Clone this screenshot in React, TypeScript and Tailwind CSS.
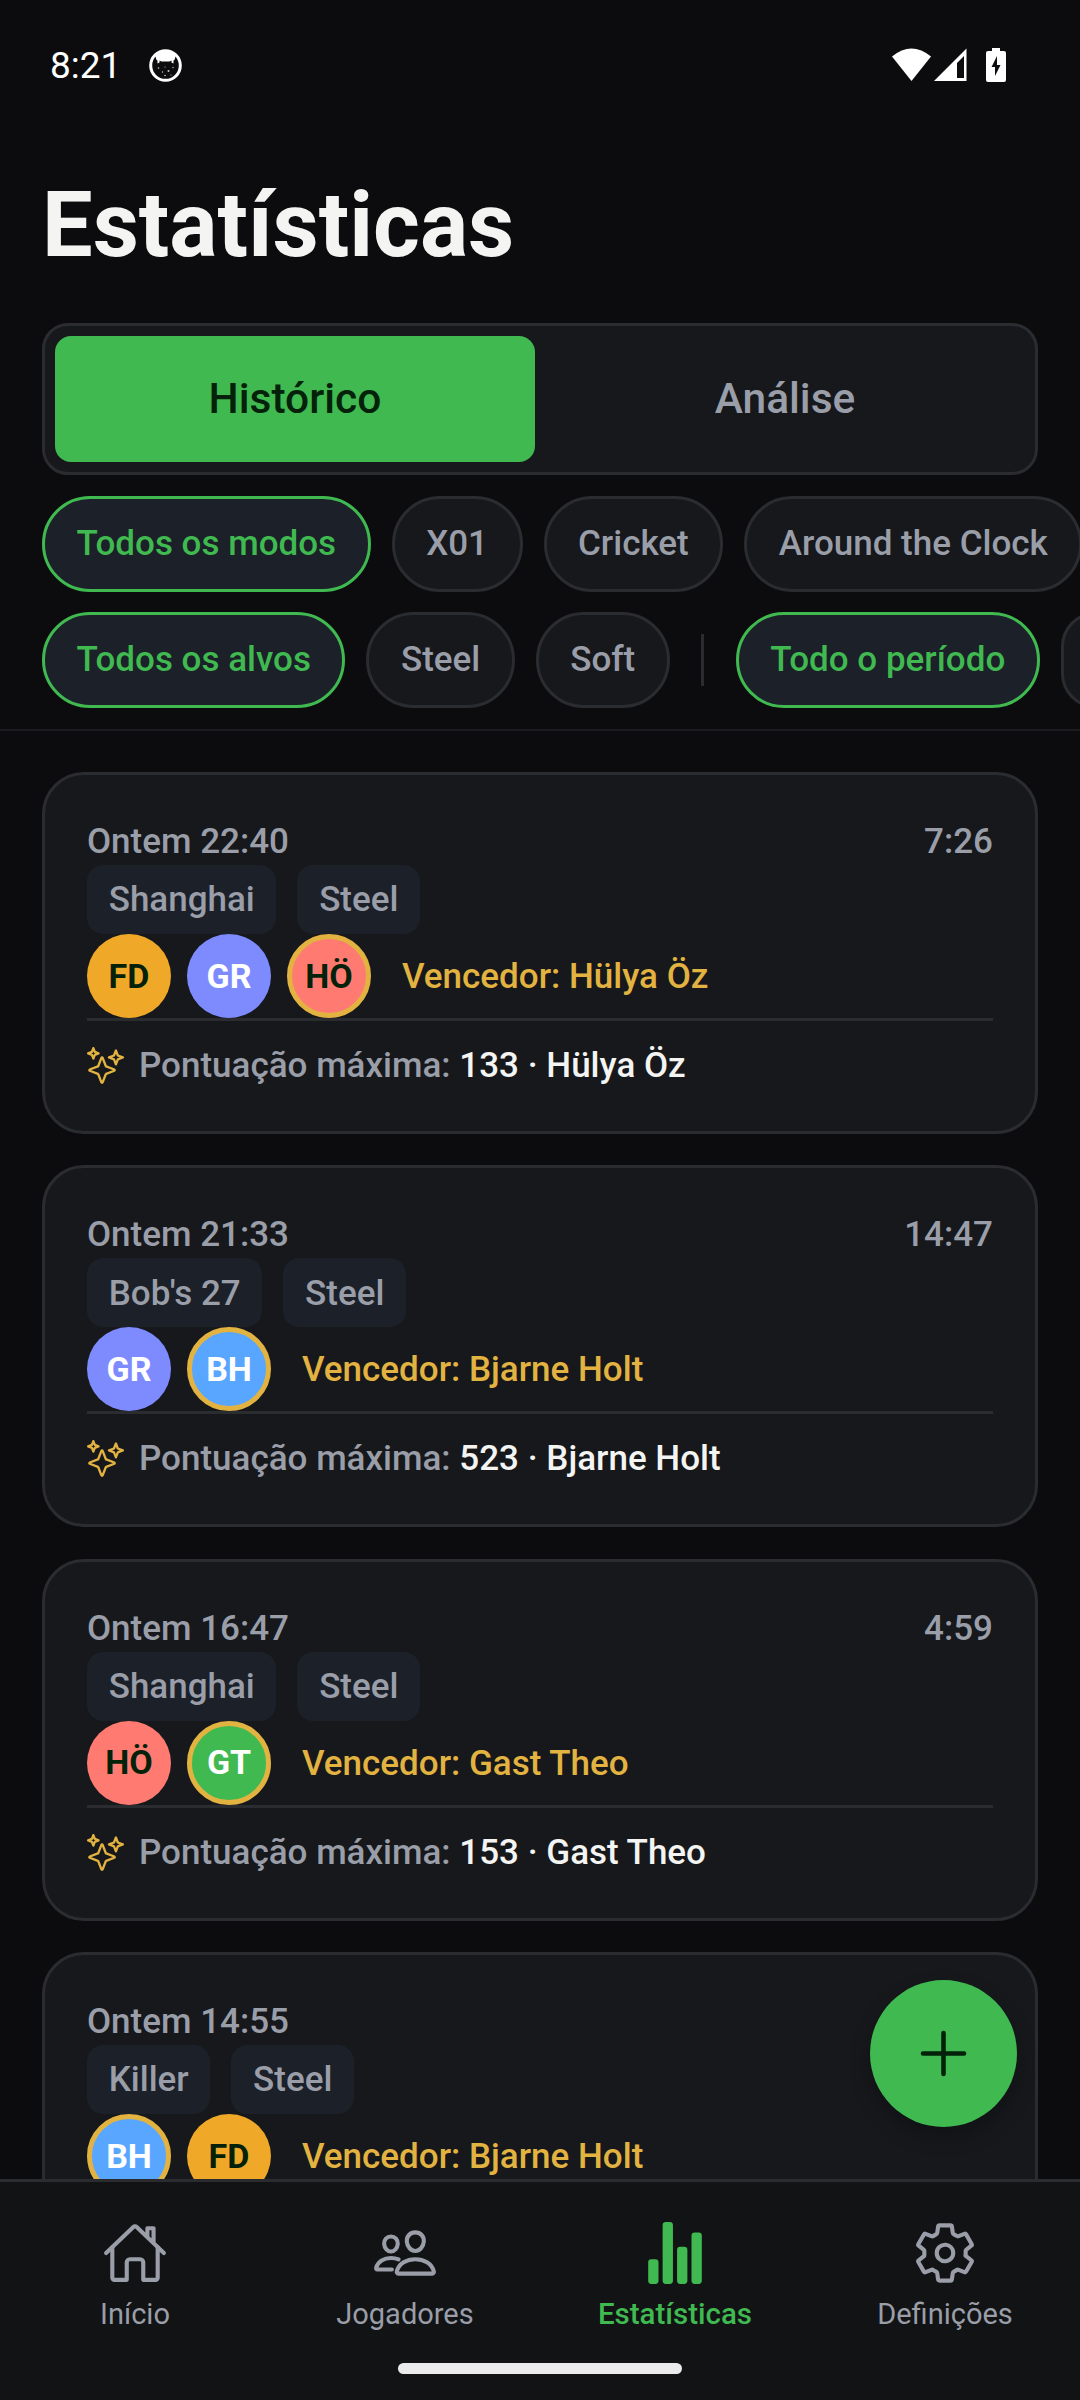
import { useState } from "react";
import {
    IoAdd,
    IoHomeOutline,
    IoPeopleOutline,
    IoSettingsOutline,
    IoSparklesOutline,
    IoStatsChart,
} from "react-icons/io5";

interface Jogador {
    nome: string;
    iniciais: string;
    cor: string;
}

interface Partida {
    id: number;
    data: string;
    duracao: string;
    modo: string;
    alvo: string;
    jogadores: Jogador[];
    vencedor: string;
    pontuacao?: number;
}

const FD: Jogador = { nome: "FD", iniciais: "FD", cor: "bg-[#f0a828] text-[#04210a]" };
const GR: Jogador = { nome: "GR", iniciais: "GR", cor: "bg-[#7d8bff] text-white" };
const HO: Jogador = { nome: "Hülya Öz", iniciais: "HÖ", cor: "bg-[#ff7b72] text-[#04210a]" };
const BH: Jogador = { nome: "Bjarne Holt", iniciais: "BH", cor: "bg-[#58a6ff] text-white" };
const GT: Jogador = { nome: "Gast Theo", iniciais: "GT", cor: "bg-[#3fb950] text-white" };

const partidas: Partida[] = [
    { id: 1, data: "Ontem 22:40", duracao: "7:26", modo: "Shanghai", alvo: "Steel", jogadores: [FD, GR, HO], vencedor: "Hülya Öz", pontuacao: 133 },
    { id: 2, data: "Ontem 21:33", duracao: "14:47", modo: "Bob's 27", alvo: "Steel", jogadores: [GR, BH], vencedor: "Bjarne Holt", pontuacao: 523 },
    { id: 3, data: "Ontem 16:47", duracao: "4:59", modo: "Shanghai", alvo: "Steel", jogadores: [HO, GT], vencedor: "Gast Theo", pontuacao: 153 },
    { id: 4, data: "Ontem 14:55", duracao: "", modo: "Killer", alvo: "Steel", jogadores: [BH, FD], vencedor: "Bjarne Holt" },
];

const separadores = [
    { nome: "Início", Icone: IoHomeOutline },
    { nome: "Jogadores", Icone: IoPeopleOutline },
    { nome: "Estatísticas", Icone: IoStatsChart },
    { nome: "Definições", Icone: IoSettingsOutline },
];

const BarraEstado = () => (
    <div className="flex h-[130px] shrink-0 items-center justify-between pr-[74px] pl-[50px] text-white">
        <div className="flex items-center">
            <span className="w-[99px] text-[37px] leading-none">8:21</span>
            <svg width="33" height="33" viewBox="0 0 33 33">
                <circle cx="16.5" cy="16.5" r="14.8" fill="#0c0c0e" stroke="white" strokeWidth="3" />
                <path d="M6 6 Q16.5 -3 27 6 L25.5 11 L24.5 11.5 V14.5 L22.5 13.5 V11.5 L20.5 12.5 H12.5 L10.5 11.5 V13.5 L8.5 14.5 V11.5 L7.5 11 Z" fill="white" />
                <g fill="#c8c8c8">
                    <circle cx="9.5" cy="19" r="0.8" />
                    <circle cx="16" cy="18" r="0.6" />
                    <circle cx="19.5" cy="22" r="1" />
                    <circle cx="24" cy="18.5" r="0.7" />
                    <circle cx="13.5" cy="23" r="0.7" />
                    <circle cx="16" cy="26.5" r="0.8" />
                    <circle cx="22" cy="26" r="0.6" />
                </g>
            </svg>
        </div>
        <svg width="114" height="35" viewBox="0 0 114 35" fill="white">
            <path d="M0 8.5 Q19.5 -7.5 39 8.5 L19.5 33 Z" />
            <path fillRule="evenodd" d="M42 33 L74.5 0.5 V33 Z M65 15 L72 8 V30 H65 Z" />
            <path fillRule="evenodd" d="M100 0 h8 v3 h4 q2 0 2 2 v27 q0 2 -2 2 h-16 q-2 0 -2 -2 v-27 q0 -2 2 -2 h4 Z M105 8 L99.5 19 H103 V28 L108.5 17 H105 Z" />
        </svg>
    </div>
);

const Chip = ({ texto, ativo }: { texto: string; ativo?: boolean }) => (
    <button
        className={`flex h-[95.5px] shrink-0 items-center rounded-full border-[3px] px-[31.5px] text-[35px] font-medium whitespace-nowrap ${
            ativo ? "border-[#3fb950] bg-[#1c2028] text-[#3fb950]" : "border-[#2a2c30] bg-[#16181c] text-[#9a9ea8]"
        }`}
    >
        {texto}
    </button>
);

const Etiqueta = ({ texto }: { texto: string }) => (
    <span className="flex h-[69px] items-center rounded-2xl bg-[#1c2028] px-[21.7px] pt-[2px] text-[35px] font-medium text-[#9a9ea8]">
        {texto}
    </span>
);

const CartaoPartida = ({ partida }: { partida: Partida }) => (
    <div className="flex h-[362px] shrink-0 flex-col rounded-[42px] border-[3px] border-[#2a2c30] bg-[#16181c] p-[42px] text-[35px] font-medium text-[#9a9ea8]">
        <div className="flex h-[48px] shrink-0 items-center justify-between pt-[2px]">
            <span>{partida.data}</span>
            <span>{partida.duracao}</span>
        </div>
        <div className="flex gap-[21px]">
            <Etiqueta texto={partida.modo} />
            <Etiqueta texto={partida.alvo} />
        </div>
        <div className="flex h-[84px] shrink-0 items-center gap-4">
            {partida.jogadores.map((j) => (
                <span
                    key={j.iniciais}
                    className={`flex size-[84px] items-center justify-center rounded-full text-[34px] font-bold ${j.cor} ${
                        j.nome === partida.vencedor ? "border-[5px] border-[#e3b341]" : ""
                    }`}
                >
                    {j.iniciais}
                </span>
            ))}
            <span className="ml-[15px] pt-[2px] text-[#e3b341]">Vencedor: {partida.vencedor}</span>
        </div>
        {partida.pontuacao && (
            <div className="flex items-center border-t-[3px] border-[#2a2c30] pt-[21px]">
                <IoSparklesOutline className="mr-[15px] size-[37px] text-[#e3b341]" />
                <span className="leading-[47px]">
                    Pontuação máxima:{" "}
                    <span className="text-[#f4f4f2]">
                        {partida.pontuacao} · {partida.vencedor}
                    </span>
                </span>
            </div>
        )}
    </div>
);

const App = () => {
    const [vista, setVista] = useState("Histórico");

    return (
        <div className="flex h-[2400px] w-[1080px] flex-col overflow-hidden bg-[#0c0c0e] font-[Roboto,sans-serif]">
            <BarraEstado />
            <h1 className="mt-[38px] h-[116px] shrink-0 pl-[42px] text-[90px] leading-[116px] font-bold text-[#f4f4f2]">
                Estatísticas
            </h1>

            <div className="mx-[42px] mt-[39px] flex h-[152px] shrink-0 gap-[10px] rounded-[26px] border-[3px] border-[#2a2c30] bg-[#16181c] p-[10px]">
                {["Histórico", "Análise"].map((v) => (
                    <button
                        key={v}
                        onClick={() => setVista(v)}
                        className={`flex-1 rounded-2xl text-[42.5px] font-medium ${
                            v === vista ? "bg-[#3fb950] text-[#04210a]" : "text-[#9a9ea8]"
                        }`}
                    >
                        {v}
                    </button>
                ))}
            </div>

            <div className="mt-[21px] flex shrink-0 gap-[21px] overflow-hidden pl-[42px]">
                <Chip texto="Todos os modos" ativo />
                <Chip texto="X01" />
                <Chip texto="Cricket" />
                <Chip texto="Around the Clock" />
            </div>
            <div className="mt-[20.5px] flex shrink-0 items-center gap-[21px] overflow-hidden pl-[42px]">
                <Chip texto="Todos os alvos" ativo />
                <Chip texto="Steel" />
                <Chip texto="Soft" />
                <div className="mx-[10.5px] h-[52px] w-[3px] shrink-0 bg-[#2a2c30]" />
                <Chip texto="Todo o período" ativo />
                <Chip texto="" />
            </div>

            <div className="mt-[21.5px] h-[2px] shrink-0 bg-[#1b1c1f]" />

            <div className="relative flex min-h-0 flex-1 flex-col">
                <div className="flex min-h-0 flex-1 flex-col gap-[31.4px] overflow-hidden px-[42px] pt-[41px]">
                    {partidas.map((p) => (
                        <CartaoPartida key={p.id} partida={p} />
                    ))}
                </div>
                <button className="absolute right-[63px] bottom-[52px] flex size-[147px] items-center justify-center rounded-full bg-[#3fb950] text-[#04210a] shadow-[0_10px_20px_rgba(0,0,0,0.25)]">
                    <IoAdd className="size-[73px]" />
                </button>
            </div>

            <nav className="flex h-[221px] shrink-0 flex-col items-center border-t-[3px] border-[#2a2c30] bg-[#121315]">
                <div className="grid w-full grid-cols-4 pt-[38px]">
                    {separadores.map(({ nome, Icone }) => (
                        <div
                            key={nome}
                            className={`flex flex-col items-center ${
                                nome === "Estatísticas"
                                    ? "text-[29.5px] font-medium text-[#3fb950]"
                                    : "text-[29px] text-[#9a9ea8]"
                            }`}
                        >
                            <Icone className="size-[66px]" />
                            <span className="mt-[11px] leading-[34px]">{nome}</span>
                        </div>
                    ))}
                </div>
                <div className="mt-[32px] h-[11px] w-[284px] rounded-full bg-[#ebebeb]" />
            </nav>
        </div>
    );
};

export default App;
